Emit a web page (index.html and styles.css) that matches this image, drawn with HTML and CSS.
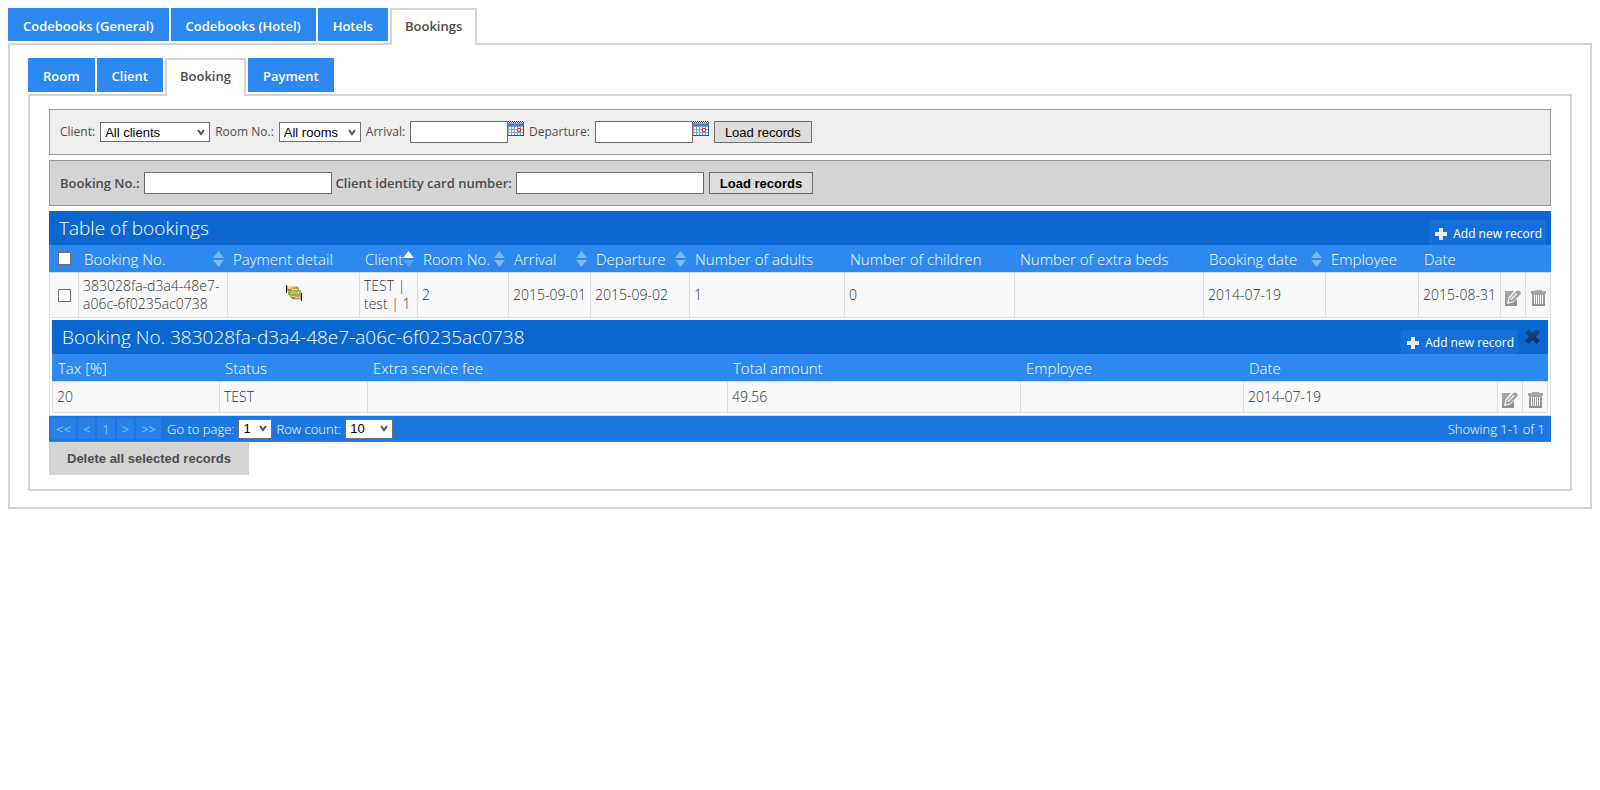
FILE: index.html
```html
<!DOCTYPE html>
<html lang="en">
<head>
<meta charset="utf-8">
<title>Bookings</title>
<link rel="stylesheet" href="styles.css">
</head>
<body>
<svg class="sprite" aria-hidden="true">
  <defs>
    <linearGradient id="grey" x1="0" y1="0" x2="0" y2="1"><stop offset="0" stop-color="#aaa"/><stop offset="1" stop-color="#8e8e8e"/></linearGradient>
    <symbol id="sort" viewBox="0 0 11 16"><path d="M5.500 0 11 7H0z"/><path d="M0 9h11l-5.500 7z"/></symbol>
    <symbol id="sort-asc" viewBox="0 0 11 16"><path d="M5.500 0 11 7H0z"/><path d="M0 9h11l-5.500 7z" fill="#57a3f3"/></symbol>
    <symbol id="plus" viewBox="0 0 12 12"><path d="M4 0h4v4h4v4H8v4H4V8H0V4h4z" fill="#e9ecec"/></symbol>
    <symbol id="edit" viewBox="0 0 16 16"><path d="M0 1h9L3.500 7.500 2 14l6-1.500 4-4V16H0z" fill="url(#grey)"/><path d="M3.500 12.500 4.500 8.500 11.500 1Q13-.3 15 1.200q1.500 1.800.3 3.300L8 11.500z" fill="#9f9f9f"/><path d="M6 9.500 12 3.500" stroke="#f9f9f9" stroke-width="1.300"/></symbol>
    <symbol id="trash" viewBox="0 0 15 16"><path d="M4 0h7v1h4v3H0V1h4zM1 4h13v12H1z" fill="url(#grey)"/><path d="M3.500 5v9M5.500 5v9M7.500 5v9M9.500 5v9M11.500 5v9" stroke="#fff"/></symbol>
    <symbol id="calendar" viewBox="0 0 16 15">
      <path d="M0 2h16v13H0z" fill="#7f9fce"/><path d="M0 2h16v3H0z" fill="#3f7be8"/><path d="M1 2h13v1H1z" fill="#78a8f6"/>
      <path d="M0 .5h16" stroke="#222" stroke-dasharray="1 1"/><path d="M1 1.500h15" stroke="#555" stroke-dasharray="1 1"/>
      <path d="M1 6h2v2H1zM4 6h2v2H4zM7 6h2v2H7zM10 6h2v2h-2zM13 6h2v2h-2zM1 9h2v2H1zM4 9h2v2H4zM7 9h2v2H7zM13 9h2v2h-2zM1 12h2v2H1zM4 12h2v2H4zM7 12h2v2H7zM10 12h2v2h-2zM13 12h2v2h-2z" fill="#f4f8ff"/>
      <path d="M9.500 7.500h3v3h-3z" fill="#fff" stroke="#e5391a"/><path d="M15.500 5v10M0 14.500h16" stroke="#31588f"/>
    </symbol>
    <symbol id="money" viewBox="0 0 16 16">
      <path d="M0 0h1v8H0zM15 8h1v8h-1z" fill="#161616"/>
      <path d="M1 1h10l2 2v2H9v3H4L1 6z" fill="#d39660"/><path d="M2 1h8l1 1H7l-2 2H2z" fill="#f1cfa9"/>
      <path d="M3 10h4l2-1h6v6H7l-2-2z" fill="#cf935c"/><path d="M5 11h3l2 1h4v1H7zM7 14h7v1H8z" fill="#f0caa2"/>
      <path d="M6 5h9v4h-2V6H6zM2 7h3v2h8v1H2z" fill="#80bd33"/><path d="M12 6h2v1h-2z" fill="#b9e07a"/>
      <path d="M6 4h2v1H6zM9 4h2v1H9z" fill="#fff3e4"/><path d="M6 6h6v3H6z" fill="#dca878"/>
      <path d="M2 4.500h3M6 12.500h3" stroke="#a0622f"/>
    </symbol>
    <linearGradient id="navy" x1="0" y1="0" x2="0" y2="1"><stop offset="0" stop-color="#164d86"/><stop offset="1" stop-color="#0b2c57"/></linearGradient>
    <symbol id="cross" viewBox="0 0 15 15"><path d="M3.500 0 7.500 4 11.500 0 15 3.500 11 7.500 15 11.500 11.500 15 7.500 11 3.500 15 0 11.500 4 7.500 0 3.500z" fill="url(#navy)"/></symbol>
  </defs>
</svg>

<nav class="tabs">
  <a class="tab" href="#general">Codebooks (General)</a>
  <a class="tab" href="#hotel">Codebooks (Hotel)</a>
  <a class="tab" href="#hotels">Hotels</a>
  <a class="tab tab-active" href="#bookings">Bookings</a>
</nav>
<main class="panel panel-outer">
  <nav class="tabs tabs-inner">
    <a class="tab" href="#room">Room</a>
    <a class="tab" href="#client">Client</a>
    <a class="tab tab-active" href="#booking">Booking</a>
    <a class="tab" href="#payment">Payment</a>
  </nav>
  <section class="panel panel-inner">
    <form class="filter">
      <label for="client">Client:</label>
      <select class="select select-client" id="client"><option>All clients</option></select>
      <label for="room-no">Room No.:</label>
      <select class="select select-room" id="room-no"><option>All rooms</option></select>
      <label for="arrival">Arrival:</label>
      <span class="date"><input class="input input-date" id="arrival" type="text"><button class="icon-button" type="button" aria-label="Pick arrival"><svg width="16" height="15"><use href="#calendar"/></svg></button></span>
      <label for="departure">Departure:</label>
      <span class="date"><input class="input input-date" id="departure" type="text"><button class="icon-button" type="button" aria-label="Pick departure"><svg width="16" height="15"><use href="#calendar"/></svg></button></span>
      <button class="load" type="button">Load records</button>
    </form>
    <form class="filter filter-strong">
      <label for="booking-no">Booking No.:</label>
      <input class="input input-wide" id="booking-no" type="text">
      <label for="card">Client identity card number:</label>
      <input class="input input-wide" id="card" type="text">
      <button class="load" type="button">Load records</button>
    </form>

    <header class="title">
      <h2>Table of bookings</h2>
      <button class="add" type="button"><svg width="12" height="12"><use href="#plus"/></svg>Add new record</button>
    </header>
    <table class="grid">
      <colgroup><col class="w29"><col class="w149"><col class="w132"><col class="w58"><col class="w91"><col class="w82"><col class="w99"><col class="w155"><col class="w170"><col class="w189"><col class="w122"><col class="w93"><col class="w82"><col class="w25"><col class="w26"></colgroup>
      <thead>
        <tr>
          <th class="check"><input type="checkbox" aria-label="Select all"></th>
          <th><span class="sortable">Booking No.<svg class="sort" width="11" height="16"><use href="#sort"/></svg></span></th>
          <th>Payment detail</th>
          <th><span class="sortable">Client<svg class="sort sort-asc" width="11" height="16"><use href="#sort-asc"/></svg></span></th>
          <th><span class="sortable">Room No.<svg class="sort" width="11" height="16"><use href="#sort"/></svg></span></th>
          <th><span class="sortable">Arrival<svg class="sort" width="11" height="16"><use href="#sort"/></svg></span></th>
          <th><span class="sortable">Departure<svg class="sort" width="11" height="16"><use href="#sort"/></svg></span></th>
          <th>Number of adults</th>
          <th>Number of children</th>
          <th>Number of extra beds</th>
          <th><span class="sortable">Booking date<svg class="sort" width="11" height="16"><use href="#sort"/></svg></span></th>
          <th>Employee</th>
          <th>Date</th>
          <th></th>
          <th></th>
        </tr>
      </thead>
      <tbody>
        <tr class="record record-tall">
          <td class="check"><input type="checkbox" aria-label="Select booking"></td>
          <td>383028fa-d3a4-48e7-a06c-6f0235ac0738</td>
          <td class="center"><button class="icon-button" type="button" aria-label="Payment detail"><svg width="16" height="16"><use href="#money"/></svg></button></td>
          <td>TEST | test | 1</td>
          <td>2</td>
          <td>2015-09-01</td>
          <td>2015-09-02</td>
          <td>1</td>
          <td>0</td>
          <td></td>
          <td>2014-07-19</td>
          <td></td>
          <td>2015-08-31</td>
          <td class="action"><button class="icon-button" type="button" aria-label="Edit"><svg width="16" height="16"><use href="#edit"/></svg></button></td>
          <td class="action"><button class="icon-button" type="button" aria-label="Delete"><svg width="15" height="16"><use href="#trash"/></svg></button></td>
        </tr>
        <tr>
          <td class="nested" colspan="15">
            <header class="title">
              <h2>Booking No. 383028fa-d3a4-48e7-a06c-6f0235ac0738</h2>
              <button class="add" type="button"><svg width="12" height="12"><use href="#plus"/></svg>Add new record</button>
              <button class="icon-button close" type="button" aria-label="Close"><svg width="15" height="15"><use href="#cross"/></svg></button>
            </header>
            <table class="grid">
              <colgroup><col class="w167"><col class="w148"><col class="w360"><col class="w293"><col class="w223"><col class="w254"><col class="w25"><col class="w26"></colgroup>
              <thead>
                <tr><th>Tax [%]</th><th>Status</th><th>Extra service fee</th><th>Total amount</th><th>Employee</th><th>Date</th><th></th><th></th></tr>
              </thead>
              <tbody>
                <tr class="record">
                  <td>20</td><td>TEST</td><td></td><td>49.56</td><td></td><td>2014-07-19</td>
                  <td class="action"><button class="icon-button" type="button" aria-label="Edit"><svg width="16" height="16"><use href="#edit"/></svg></button></td>
                  <td class="action"><button class="icon-button" type="button" aria-label="Delete"><svg width="15" height="16"><use href="#trash"/></svg></button></td>
                </tr>
              </tbody>
            </table>
          </td>
        </tr>
      </tbody>
    </table>
    <footer class="pager">
      <div class="pages">
        <button type="button" class="page">&lt;&lt;</button>
        <button type="button" class="page">&lt;</button>
        <button type="button" class="page">1</button>
        <button type="button" class="page">&gt;</button>
        <button type="button" class="page">&gt;&gt;</button>
      </div>
      <label for="goto">Go to page:</label>
      <select class="select select-page" id="goto"><option>1</option></select>
      <label for="rows">Row count:</label>
      <select class="select select-rows" id="rows"><option>10</option></select>
      <span class="showing">Showing 1-1 of 1</span>
    </footer>
    <button class="delete-all" type="button">Delete all selected records</button>
  </section>
</main>
</body>
</html>
```
FILE: styles.css
```css
* { box-sizing: border-box; }
body {
  margin: 8px;
  background: #fff;
  color: #4d4d4d;
  font: 12px/18px "Open Sans", sans-serif;
}
.sprite { position: absolute; width: 0; height: 0; }
svg { display: block; }
button { cursor: pointer; }

.tabs { display: flex; align-items: flex-start; gap: 2px; }
.tab {
  padding: 9px 15px 6px;
  background: #2d89ef;
  color: #fff;
  font: 600 13px/18px "Open Sans", sans-serif;
  text-decoration: none;
}
.tabs-inner .tab { padding-bottom: 7px; }
.tabs .tab-active {
  position: relative;
  margin-bottom: -2px;
  padding: 7px 13px 10px;
  border: 2px solid #d4d4d4;
  border-bottom: 0;
  background: #fff;
  color: #4d4d4d;
}
.tabs-inner .tab-active { padding-bottom: 11px; }
.panel { border: 2px solid #d4d4d4; }
.panel-outer { padding: 13px 18px 16px; }
.panel-inner { padding: 13px 19px 14px; }

.filter {
  display: flex;
  align-items: center;
  gap: 5px;
  height: 46px;
  margin-bottom: 5px;
  padding: 0 10px;
  border: 1px solid #999;
  background: #eee;
  white-space: nowrap;
}
.filter-strong { gap: 4px; background: #d4d4d4; font-size: 13px; font-weight: 600; }
.input {
  height: 22px;
  padding: 1px 3px;
  border: 1px solid #707070;
  background: #fff;
  font: 13px "Liberation Sans", sans-serif;
}
.input-date { width: 98px; }
.input-wide { width: 188px; }
.date { display: flex; align-items: flex-start; }
.icon-button { display: inline-block; padding: 0; border: 0; background: none; }
.select {
  appearance: none;
  height: 20px;
  padding: 0 4px;
  border: 1px solid #707070;
  border-radius: 0;
  background: #fff url("data:image/svg+xml,%3Csvg xmlns='http://www.w3.org/2000/svg' width='8' height='7'%3E%3Cpath d='M1 1l3 4 3-4' fill='none' stroke='%23505050' stroke-width='2'/%3E%3C/svg%3E") no-repeat right 4px center;
  color: #000;
  font: 13px "Liberation Sans", sans-serif;
}
.select-client { width: 110px; }
.select-room { width: 82px; }
.select-page { width: 34px; }
.select-rows { width: 48px; }
.load {
  height: 22px;
  padding: 0 10px;
  border: 1px solid #707070;
  background: #ddd;
  color: #000;
  font: 13px "Liberation Sans", sans-serif;
}
.filter-strong .load { margin-left: 1px; font-weight: 700; }

.title {
  display: flex;
  align-items: flex-end;
  height: 34px;
  padding: 0 5px 0 10px;
  background: #0b67d0;
  color: #fff;
}
.title h2 {
  flex: 1;
  margin: 0;
  font: 300 19px/34px "Open Sans", sans-serif;
}
.add {
  display: flex;
  align-items: center;
  gap: 6px;
  height: 25px;
  padding: 2px 4px 0 6px;
  border: 0;
  background: #146fdb;
  color: #fff;
  font: 400 12px/18px "Open Sans", sans-serif;
}

.grid {
  width: 100%;
  table-layout: fixed;
  border-collapse: separate;
  border-spacing: 0;
  color: #333;
  font: 300 14px/18px "Open Sans", sans-serif;
}
.grid th {
  height: 27px;
  padding: 0 3px 0 6px;
  background: #2d89ef;
  color: #fff;
  font-size: 15px;
  font-weight: 300;
  text-align: left;
  white-space: nowrap;
}
.sortable { display: flex; align-items: center; justify-content: space-between; }
.sort { flex: none; fill: #81b7f5; }
.sort-asc { fill: #fff; }
.record td {
  height: 32px;
  padding: 0 4px;
  border: 1px solid #ddd;
  border-right: 0;
  background: #f9f9f9;
}
.record-tall td { height: 46px; }
.record td:last-child { border-right: 1px solid #ddd; }
.grid .check { padding: 0; text-align: center; }
.grid th.check { padding-left: 1px; }
.check input { display: block; width: 13px; height: 13px; margin: 0 auto; appearance: none; border: 1px solid #707070; background: #fff; }
.grid .center { text-align: center; }
.grid .center svg { margin: auto; }
.record .action { padding: 6px 0 0 4px; }
.record .action:last-child { padding-left: 5px; }
.action .icon-button { display: block; }
.nested { padding: 2px; border: 1px solid #ddd; border-top: 0; }
.nested .close { align-self: flex-start; margin: 9px 0 0 7px; }
.nested .title { padding-right: 8px; }
.nested .add { height: 24px; }

.w25 { width: 25px; } .w26 { width: 26px; } .w29 { width: 29px; }
.w58 { width: 58px; } .w82 { width: 82px; } .w91 { width: 91px; }
.w93 { width: 93px; } .w99 { width: 99px; } .w122 { width: 122px; }
.w132 { width: 132px; } .w148 { width: 148px; } .w149 { width: 149px; }
.w155 { width: 155px; } .w167 { width: 167px; } .w170 { width: 170px; }
.w189 { width: 189px; } .w223 { width: 223px; } .w254 { width: 254px; }
.w293 { width: 293px; } .w360 { width: 360px; }

.pager {
  display: flex;
  align-items: center;
  gap: 4px;
  height: 26px;
  padding: 0 6px 0 2px;
  border-bottom: 1px solid #2d89ef;
  background: #1c77e0;
  color: #fff;
  font: 300 13px/18px "Open Sans", sans-serif;
}
.pages { display: flex; gap: 2px; margin-right: 2px; }
.page {
  height: 21px;
  padding: 0 5px;
  border: 0;
  background: #2781e9;
  color: #8fc0f7;
  font: 400 13px/18px "Open Sans", sans-serif;
}
.showing { margin-left: auto; }
.delete-all {
  display: block;
  height: 33px;
  padding: 0 18px;
  border: 0;
  background: #d4d4d4;
  color: #4d4d4d;
  font: 700 13px "Liberation Sans", sans-serif;
}
```
